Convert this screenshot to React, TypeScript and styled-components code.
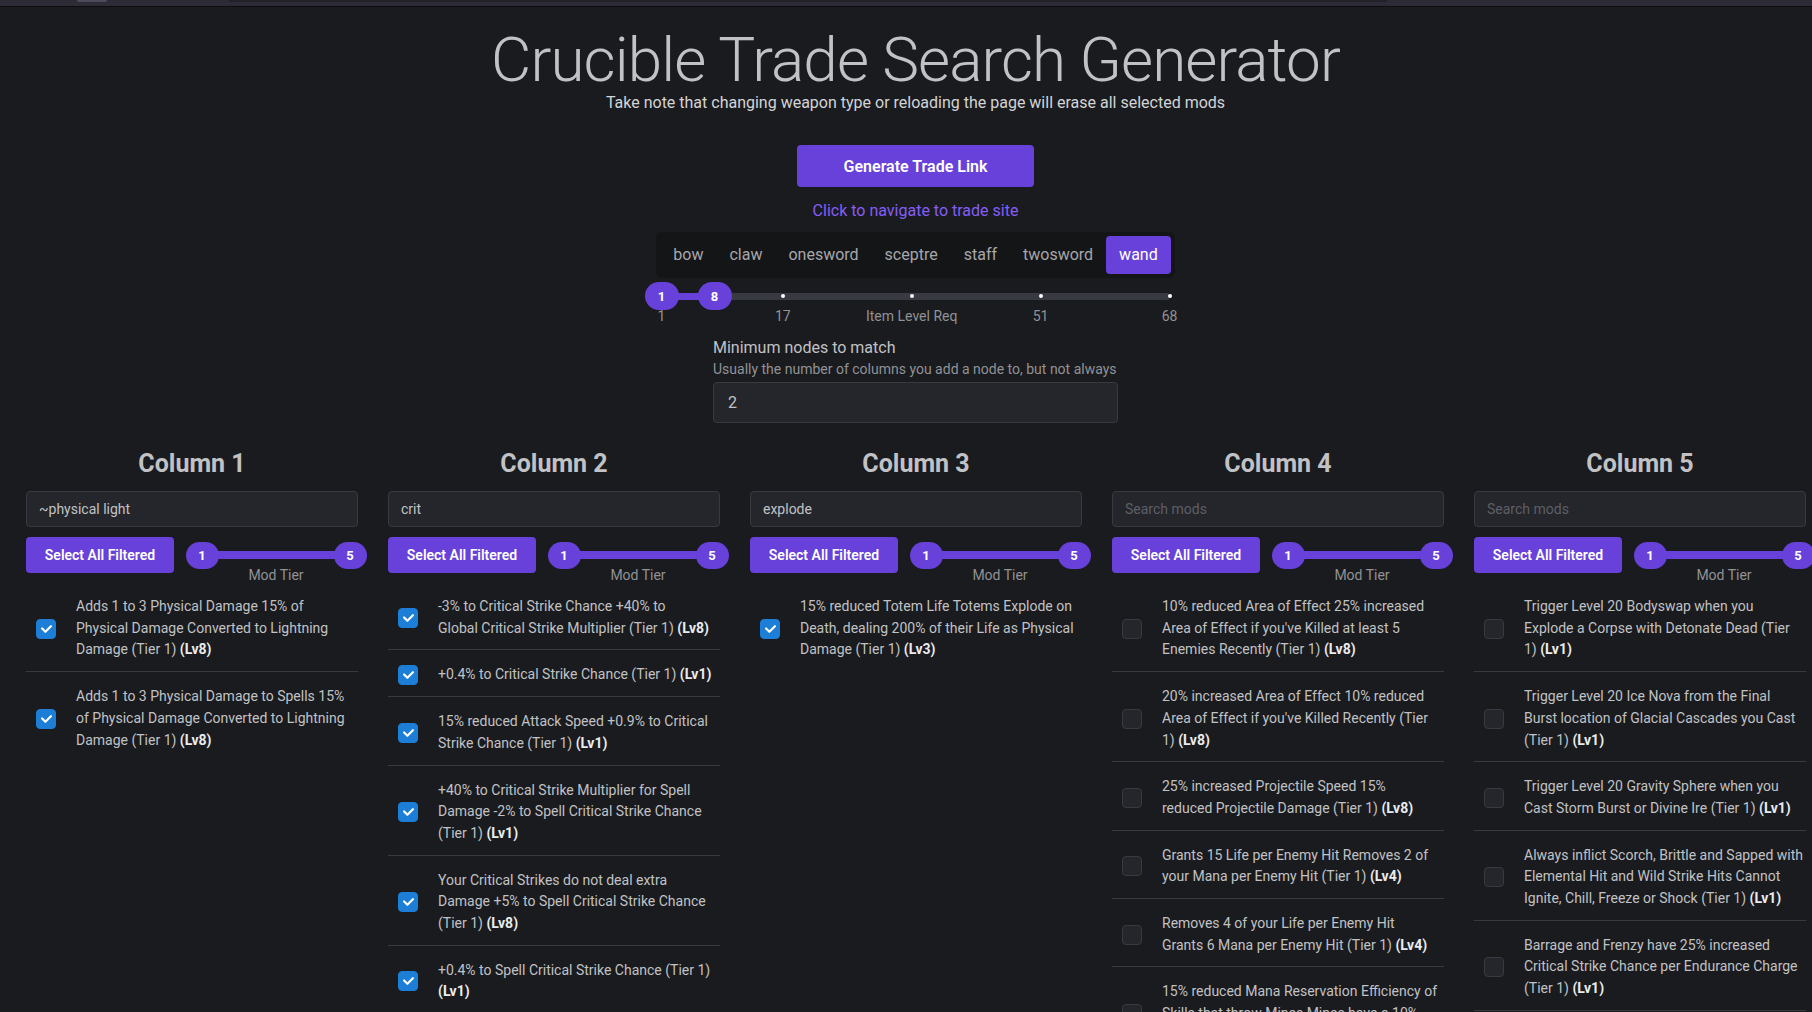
import React from 'react';
import styled, { createGlobalStyle } from 'styled-components';

const VIOLET = '#6741d9';
const FONT = 'Roboto, "Liberation Sans", sans-serif';

const GlobalStyle = createGlobalStyle`
  html, body { margin: 0; padding: 0; background: #1a1b1e; }
  body { font-family: ${FONT}; color: #c1c2c5; }
  * { box-sizing: border-box; }
`;

const TopStrip = styled.div`
  height: 7px;
  background: #2c2b36;
  border-bottom: 1px solid #0e0e11;
  display: flex;
  align-items: flex-start;
  padding-left: 77px;
`;
const StripTab = styled.div`
  width: 30px;
  height: 2px;
  background: #4d4b5b;
  border-radius: 0 0 3px 3px;
`;
const StripBar = styled.div`
  margin-left: 122px;
  width: 1158px;
  height: 2px;
  background: #222128;
`;

const Page = styled.div`
  padding: 0 7px 0 26px;
`;

const Header = styled.header`
  display: flex;
  flex-direction: column;
  align-items: center;
`;

const Title = styled.h1`
  margin: 21px 0 0;
  font-size: 62px;
  line-height: 64px;
  font-weight: 300;
  letter-spacing: -0.9px;
  color: #c1c2c5;
`;

const Subtitle = styled.p`
  margin: -1px 0 0;
  font-size: 16px;
  line-height: 24px;
  color: #d3d4d7;
`;

const GenerateButton = styled.button`
  margin-top: 30px;
  width: 237px;
  height: 42px;
  border: none;
  border-radius: 4px;
  background: ${VIOLET};
  color: #fff;
  font-family: ${FONT};
  font-size: 16px;
  font-weight: 600;
`;

const TradeLink = styled.a`
  margin-top: 12px;
  font-size: 16px;
  line-height: 24px;
  color: #845ef7;
  text-decoration: none;
`;

const Segmented = styled.div`
  margin-top: 9px;
  display: flex;
  padding: 4px;
  background: #141517;
  border-radius: 6px;
`;

const SegItem = styled.div<{ $active?: boolean }>`
  padding: 0 13px;
  height: 38px;
  line-height: 38px;
  font-size: 16px;
  border-radius: 4px;
  color: ${(p) => (p.$active ? '#fff' : '#a6a7ab')};
  background: ${(p) => (p.$active ? VIOLET : 'transparent')};
`;

const LevelSlider = styled.div`
  margin-top: 4px;
  width: 522px;
  padding: 0 7px;
`;

const TrackArea = styled.div<{ $h: number }>`
  position: relative;
  width: 100%;
  height: ${(p) => p.$h}px;
  display: flex;
  align-items: center;
`;

const Track = styled.div<{ $t: number }>`
  position: relative;
  width: 100%;
  height: ${(p) => p.$t}px;
  border-radius: 4px;
  background: #373a40;
`;

const Fill = styled.div`
  position: absolute;
  top: 0;
  bottom: 0;
  background: ${VIOLET};
`;

const Dot = styled.div`
  position: absolute;
  top: 50%;
  width: 4px;
  height: 4px;
  margin: -2px 0 0 -2px;
  border-radius: 50%;
  background: #fff;
`;

const Thumb = styled.div<{ $w: number; $h: number }>`
  position: absolute;
  top: 50%;
  width: ${(p) => p.$w}px;
  height: ${(p) => p.$h}px;
  margin-top: ${(p) => -p.$h / 2}px;
  margin-left: ${(p) => -p.$w / 2}px;
  border-radius: ${(p) => p.$h / 2}px;
  background: ${VIOLET};
  color: #fff;
  font-size: 13px;
  font-weight: 700;
  display: flex;
  align-items: center;
  justify-content: center;
`;

const MarkRow = styled.div`
  position: relative;
  height: 16px;
  margin-top: -2px;
`;

const MarkLabel = styled.span`
  position: absolute;
  top: 0;
  transform: translateX(-50%);
  white-space: nowrap;
  font-size: 14px;
  line-height: 16px;
  color: #909296;
`;

const NodesBlock = styled.div`
  margin-top: 13px;
  width: 405px;
  display: flex;
  flex-direction: column;
`;

const NodesLabel = styled.label`
  font-size: 16px;
  line-height: 22px;
  color: #c1c2c5;
`;

const NodesDesc = styled.div`
  font-size: 14px;
  line-height: 20px;
  color: #909296;
`;

const NodesInput = styled.div`
  margin-top: 3px;
  height: 41px;
  border: 1px solid #373a40;
  border-radius: 4px;
  background: #25262b;
  padding-left: 14px;
  display: flex;
  align-items: center;
  font-size: 16px;
  color: #c1c2c5;
`;

const Columns = styled.div`
  margin-top: 25px;
  display: grid;
  grid-template-columns: repeat(5, 332px);
  column-gap: 30px;
  align-items: start;
`;

const Column = styled.section`
  display: flex;
  flex-direction: column;
`;

const ColTitle = styled.h2`
  margin: 0;
  text-align: center;
  font-size: 25px;
  line-height: 32px;
  font-weight: 700;
  color: #c1c2c5;
`;

const SearchInput = styled.div<{ $empty: boolean }>`
  margin-top: 11px;
  height: 36px;
  border: 1px solid #373a40;
  border-radius: 4px;
  background: #25262b;
  padding-left: 12px;
  display: flex;
  align-items: center;
  font-size: 14px;
  color: ${(p) => (p.$empty ? '#5c5f66' : '#c1c2c5')};
`;

const Controls = styled.div`
  margin-top: 10px;
  display: flex;
  align-items: flex-start;
`;

const SelectButton = styled.button`
  flex-shrink: 0;
  width: 148px;
  height: 36px;
  border: none;
  border-radius: 4px;
  background: ${VIOLET};
  color: #fff;
  font-family: ${FONT};
  font-size: 14px;
  font-weight: 600;
`;

const TierSlider = styled.div`
  flex: 1;
  margin-left: 28px;
  margin-right: 8px;
  display: flex;
  flex-direction: column;
  align-items: center;
`;

const TierLabel = styled.div`
  margin-top: -5px;
  font-size: 14px;
  line-height: 14px;
  color: #909296;
`;

const ModList = styled.div`
  display: flex;
  flex-direction: column;
`;

const ModItem = styled.div`
  display: flex;
  align-items: center;
  gap: 20px;
  padding: 14px 10px 10px;
  & + & {
    border-top: 1px solid #373a40;
  }
`;

const Box = styled.div<{ $checked: boolean }>`
  flex-shrink: 0;
  width: 20px;
  height: 20px;
  border-radius: 4px;
  display: flex;
  align-items: center;
  justify-content: center;
  background: ${(p) => (p.$checked ? '#1c7ed6' : '#25262b')};
  border: 1px solid ${(p) => (p.$checked ? '#1c7ed6' : '#373a40')};
`;

const ModText = styled.div`
  flex: 1;
  font-size: 14px;
  line-height: 21.7px;
  color: #c1c2c5;
  b {
    font-weight: 700;
    color: #e9ecef;
  }
`;

const ModLine = styled.span`
  display: block;
  white-space: nowrap;
`;

type Mod = { lines: string[]; lv: number; checked: boolean };
type Col = { query: string; mods: Mod[] };

const columns: Col[] = [
  {
    query: '~physical light',
    mods: [
      { lines: ['Adds 1 to 3 Physical Damage 15% of', 'Physical Damage Converted to Lightning', 'Damage (Tier 1)'], lv: 8, checked: true },
      { lines: ['Adds 1 to 3 Physical Damage to Spells 15%', 'of Physical Damage Converted to Lightning', 'Damage (Tier 1)'], lv: 8, checked: true },
    ],
  },
  {
    query: 'crit',
    mods: [
      { lines: ['-3% to Critical Strike Chance +40% to', 'Global Critical Strike Multiplier (Tier 1)'], lv: 8, checked: true },
      { lines: ['+0.4% to Critical Strike Chance (Tier 1)'], lv: 1, checked: true },
      { lines: ['15% reduced Attack Speed +0.9% to Critical', 'Strike Chance (Tier 1)'], lv: 1, checked: true },
      { lines: ['+40% to Critical Strike Multiplier for Spell', 'Damage -2% to Spell Critical Strike Chance', '(Tier 1)'], lv: 1, checked: true },
      { lines: ['Your Critical Strikes do not deal extra', 'Damage +5% to Spell Critical Strike Chance', '(Tier 1)'], lv: 8, checked: true },
      { lines: ['+0.4% to Spell Critical Strike Chance (Tier 1)', ''], lv: 1, checked: true },
    ],
  },
  {
    query: 'explode',
    mods: [
      { lines: ['15% reduced Totem Life Totems Explode on', 'Death, dealing 200% of their Life as Physical', 'Damage (Tier 1)'], lv: 3, checked: true },
    ],
  },
  {
    query: '',
    mods: [
      { lines: ['10% reduced Area of Effect 25% increased', "Area of Effect if you've Killed at least 5", 'Enemies Recently (Tier 1)'], lv: 8, checked: false },
      { lines: ['20% increased Area of Effect 10% reduced', "Area of Effect if you've Killed Recently (Tier", '1)'], lv: 8, checked: false },
      { lines: ['25% increased Projectile Speed 15%', 'reduced Projectile Damage (Tier 1)'], lv: 8, checked: false },
      { lines: ['Grants 15 Life per Enemy Hit Removes 2 of', 'your Mana per Enemy Hit (Tier 1)'], lv: 4, checked: false },
      { lines: ['Removes 4 of your Life per Enemy Hit', 'Grants 6 Mana per Enemy Hit (Tier 1)'], lv: 4, checked: false },
      { lines: ['15% reduced Mana Reservation Efficiency of', 'Skills that throw Mines Mines have a 10%', 'increased Detonation Speed (Tier 1)'], lv: 4, checked: false },
    ],
  },
  {
    query: '',
    mods: [
      { lines: ['Trigger Level 20 Bodyswap when you', 'Explode a Corpse with Detonate Dead (Tier', '1)'], lv: 1, checked: false },
      { lines: ['Trigger Level 20 Ice Nova from the Final', 'Burst location of Glacial Cascades you Cast', '(Tier 1)'], lv: 1, checked: false },
      { lines: ['Trigger Level 20 Gravity Sphere when you', 'Cast Storm Burst or Divine Ire (Tier 1)'], lv: 1, checked: false },
      { lines: ['Always inflict Scorch, Brittle and Sapped with', 'Elemental Hit and Wild Strike Hits Cannot', 'Ignite, Chill, Freeze or Shock (Tier 1)'], lv: 1, checked: false },
      { lines: ['Barrage and Frenzy have 25% increased', 'Critical Strike Chance per Endurance Charge', '(Tier 1)'], lv: 1, checked: false },
      { lines: ['Barrage and Frenzy have 25% increased', 'Critical Strike Chance per Frenzy Charge', '(Tier 1)'], lv: 1, checked: false },
    ],
  },
];

const weapons = ['bow', 'claw', 'onesword', 'sceptre', 'staff', 'twosword', 'wand'];
const levelMarks: { v: number; label: string }[] = [
  { v: 1, label: '1' },
  { v: 17, label: '17' },
  { v: 34, label: 'Item Level Req' },
  { v: 51, label: '51' },
  { v: 68, label: '68' },
];
const pct = (v: number) => `${((v - 1) / 67) * 100}%`;

const CheckIcon = () => (
  <svg width="11" height="8" viewBox="0 0 10 7" fill="#fff">
    <path d="M4 4.586L1.707 2.293A1 1 0 1 0 .293 3.707l3 3a.997.997 0 0 0 1.414 0l5-5A1 1 0 1 0 8.293.293L4 4.586z" />
  </svg>
);

const ModEntry = ({ mod }: { mod: Mod }) => {
  const last = mod.lines.length - 1;
  return (
    <ModItem>
      <Box $checked={mod.checked}>{mod.checked && <CheckIcon />}</Box>
      <ModText>
        {mod.lines.map((l, k) =>
          k === last ? (
            <ModLine key={k}>
              {l ? `${l} ` : ''}
              <b>(Lv{mod.lv})</b>
            </ModLine>
          ) : (
            <ModLine key={k}>{l}</ModLine>
          )
        )}
      </ModText>
    </ModItem>
  );
};

export default function App() {
  return (
    <>
      <GlobalStyle />
      <TopStrip>
        <StripTab />
        <StripBar />
      </TopStrip>
      <Page>
        <Header>
          <Title>Crucible Trade Search Generator</Title>
          <Subtitle>Take note that changing weapon type or reloading the page will erase all selected mods</Subtitle>
          <GenerateButton>Generate Trade Link</GenerateButton>
          <TradeLink>Click to navigate to trade site</TradeLink>
          <Segmented>
            {weapons.map((w) => (
              <SegItem key={w} $active={w === 'wand'}>
                {w}
              </SegItem>
            ))}
          </Segmented>
          <LevelSlider>
            <TrackArea $h={28}>
              <Track $t={7}>
                <Fill style={{ left: pct(1), width: `calc(${pct(8)} - ${pct(1)})` }} />
                {levelMarks.slice(1).map((m) => (
                  <Dot key={m.v} style={{ left: pct(m.v) }} />
                ))}
                <Thumb $w={34} $h={28} style={{ left: pct(1) }}>1</Thumb>
                <Thumb $w={34} $h={28} style={{ left: pct(8) }}>8</Thumb>
              </Track>
            </TrackArea>
            <MarkRow>
              {levelMarks.map((m) => (
                <MarkLabel key={m.v} style={{ left: pct(m.v) }}>
                  {m.label}
                </MarkLabel>
              ))}
            </MarkRow>
          </LevelSlider>
          <NodesBlock>
            <NodesLabel>Minimum nodes to match</NodesLabel>
            <NodesDesc>Usually the number of columns you add a node to, but not always</NodesDesc>
            <NodesInput>2</NodesInput>
          </NodesBlock>
        </Header>
        <Columns>
          {columns.map((c, i) => (
            <Column key={i}>
              <ColTitle>Column {i + 1}</ColTitle>
              <SearchInput $empty={!c.query}>{c.query || 'Search mods'}</SearchInput>
              <Controls>
                <SelectButton>Select All Filtered</SelectButton>
                <TierSlider>
                  <TrackArea $h={36}>
                    <Track $t={8}>
                      <Fill style={{ left: 0, right: 0 }} />
                      <Thumb $w={33} $h={27} style={{ left: '0%' }}>1</Thumb>
                      <Thumb $w={33} $h={27} style={{ left: '100%' }}>5</Thumb>
                    </Track>
                  </TrackArea>
                  <TierLabel>Mod Tier</TierLabel>
                </TierSlider>
              </Controls>
              <ModList>
                {c.mods.map((m, j) => (
                  <ModEntry key={j} mod={m} />
                ))}
              </ModList>
            </Column>
          ))}
        </Columns>
      </Page>
    </>
  );
}
